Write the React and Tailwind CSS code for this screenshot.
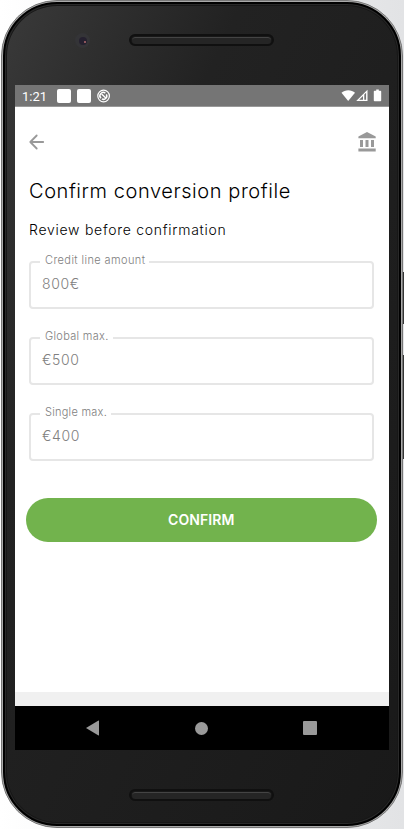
import React from "react";

function Speaker() {
  return (
    <div className="mr-[2px] flex h-[12px] w-[145px] items-center justify-center rounded-full border-2 border-[#101010] bg-[#181818]">
      <div className="h-[7px] w-[139px] rounded-full border-t border-[#444] bg-[#252525]" />
    </div>
  );
}

function StatusBar() {
  return (
    <div className="flex h-[22px] items-center border-b border-[#999] bg-[#757575] pl-[7px] pr-[6px] text-white">
      <span className="w-[35px] pt-px font-['Roboto',sans-serif] text-[13px] leading-none">1:21</span>
      <div className="flex items-center gap-[6px]">
        <div className="size-[14px] rounded-[2px] bg-white" />
        <div className="size-[14px] rounded-[2px] bg-white" />
        <svg className="size-[14px]" viewBox="0 0 14 14" fill="none" stroke="white">
          <circle cx="6.6" cy="7" r="5.8" strokeWidth="1.2" />
          <path d="M4 9.2A3.3 3.3 0 0 1 8.3 4.2M9.3 5.3A3.3 3.3 0 0 1 4.9 9.9" strokeWidth="1.5" />
          <path d="M4.6 5l4.2 4.1" strokeWidth="1.4" />
        </svg>
      </div>
      <svg className="ml-auto h-[14px] w-[42px]" viewBox="0 0 42 14" fill="white">
        <path d="M.5 3.7C3.8.3 10.7.3 14 3.7L7.2 12z" />
        <path fillRule="evenodd" d="M26.5 .8v11.3H15.2zM22 6.9l-3.8 3.8H22zM23.3 5.5v5.2h1.8V3.8z" />
        <path d="M35.2 1.7V.5h2.6v1.2h1.6q.8 0 .8.8v9q0 .8-.8.8h-5.8q-.8 0-.8-.8v-9q0-.8.8-.8z" />
      </svg>
    </div>
  );
}

function Field({ label, value, labelClass }) {
  return (
    <fieldset className="h-[53px] w-[345px] rounded-[4px] border-2 border-[#e6e6e6] pl-[11px]">
      <legend className="-ml-[2px] h-[12px] pl-[5px] pr-[4px] text-[11px] font-light leading-[9px] text-[#808080]">
        <span className={labelClass}>{label}</span>
      </legend>
      <div className="pt-[7px] text-[14px] font-light leading-[18px] tracking-[0.6px] text-[#808080]">{value}</div>
    </fieldset>
  );
}

function NavBar() {
  return (
    <div className="flex h-[44px] items-center bg-black pl-[71px]">
      <svg className="h-[16px] w-[14px]" viewBox="0 0 14 16" fill="#999">
        <path d="M0 8L12.5.6q.5-.2.5.4v14q0 .6-.5.4z" />
      </svg>
      <div className="ml-[95px] size-[13px] rounded-full bg-[#999]" />
      <div className="ml-[95px] size-[13.5px] rounded-[1px] bg-[#999]" />
    </div>
  );
}

export default function App() {
  return (
    <div className="relative h-[829px] w-[404px] overflow-hidden bg-gradient-to-r from-white to-[#e2e3e5] font-['Inter',sans-serif]">
      <div className="absolute right-0 top-[272px] h-[52px] w-[3px] bg-[#333]" />
      <div className="absolute right-0 top-[355px] h-[104px] w-[3px] bg-[#333]" />
      <div className="relative ml-px h-[828px] w-[402px] rounded-[56px] border border-[#777] bg-[#aaa] p-px">
        <div className="flex h-full flex-col items-center rounded-[54px] border-2 border-black bg-gradient-to-br from-[#3a3a3a] via-[#222] via-30% to-[#191919] shadow-[inset_0_0_0_1px_#292929,inset_0_0_0_2px_#171717]">
          <div className="relative flex h-[81px] w-full shrink-0 justify-center pt-[30px]">
            <Speaker />
            <div className="absolute left-[70px] top-[29px] flex size-[15px] items-center justify-center rounded-full bg-[#343437]">
              <div className="size-[8px] rounded-full bg-[#25202f] pl-[5px] pt-[4px]">
                <div className="size-[2px] rounded-full bg-[#b0686c]" />
              </div>
            </div>
          </div>
          <main className="flex h-[665px] w-[374px] shrink-0 flex-col bg-white">
            <StatusBar />
            <div className="flex h-[71px] items-center justify-between pb-px pl-[14px] pr-[13.5px]">
              <svg className="size-[16px]" viewBox="0 0 16 16" fill="none" stroke="#999" strokeWidth="1.8" strokeLinecap="round" strokeLinejoin="round">
                <path d="M14.2 8H1.3M7.7 1.5L1.3 8l6.4 6.5" />
              </svg>
              <svg className="h-[20px] w-[18px]" viewBox="0 0 18 20" fill="#999">
                <path d="M9 0l8.7 4.6v1.6H.4V4.6zM2 8h3v7H2zM7.5 8h3v7h-3zM13 8h3v7h-3zM.4 16.5h17.3v3H.4z" />
              </svg>
            </div>
            <h1 className="ml-[14px] h-[24px] whitespace-nowrap text-[20px] font-light leading-[26px] tracking-[0.57px] text-black">Confirm conversion profile</h1>
            <h2 className="ml-[14px] mt-[18px] h-[20px] whitespace-nowrap text-[14px] font-light leading-[20px] tracking-[0.73px] text-black">Review before confirmation</h2>
            <div className="ml-[14px] mt-[16px] flex flex-col gap-[23px]">
              <Field label="Credit line amount" value="800€" labelClass="tracking-[0.4px]" />
              <Field label="Global max." value="€500" labelClass="tracking-[0.3px]" />
              <Field label="Single max." value="€400" labelClass="tracking-[0.25px]" />
            </div>
            <button className="ml-[10.5px] mt-[37px] h-[44px] w-[351.5px] shrink-0 rounded-full bg-[#72b34d] pb-[2px] text-[14px] font-semibold tracking-[0.1px] text-white">CONFIRM</button>
            <div className="mt-auto h-[14px] bg-[#f0f0f0]" />
            <NavBar />
          </main>
          <div className="mt-[39px]"><Speaker /></div>
        </div>
      </div>
    </div>
  );
}
